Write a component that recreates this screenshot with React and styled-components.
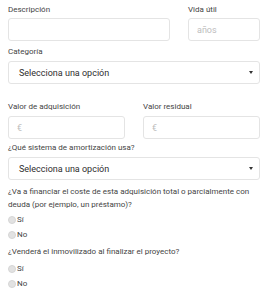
import React from "react";
import styled, { createGlobalStyle } from "styled-components";

const GlobalStyle = createGlobalStyle`
  html, body {
    margin: 0;
    padding: 0;
    background: #fff;
  }
  body {
    font-family: Roboto, "Open Sans", "DejaVu Sans", sans-serif;
    color: #444;
  }
`;

const Form = styled.form`
  width: 252px;
  padding: 3px 8px 0 8px;
  display: flex;
  flex-direction: column;
`;

const Row = styled.div`
  display: grid;
  grid-template-columns: ${(p) => p.$cols};
  column-gap: 18px;
  margin-bottom: ${(p) => p.$mb || "8px"};
`;

const Field = styled.div`
  display: flex;
  flex-direction: column;
  margin-bottom: ${(p) => p.$mb || "0"};
`;

const Label = styled.label`
  font-size: 8px;
  line-height: 13px;
  color: #444;
  margin-bottom: ${(p) => p.$mb || "2px"};
`;

const Input = styled.input`
  box-sizing: border-box;
  height: 23px;
  width: 100%;
  border: 1px solid #e4e4e4;
  border-radius: 3px;
  padding: 0 8px;
  font-family: inherit;
  font-size: 9px;
  color: #444;
  outline: none;
  &::placeholder {
    color: #bdbdbd;
  }
`;

const SelectBox = styled.div`
  box-sizing: border-box;
  height: 23px;
  border: 1px solid #e4e4e4;
  border-radius: 3px;
  padding: 0 6px 0 10px;
  display: flex;
  align-items: center;
  justify-content: space-between;
  font-size: 9px;
  color: #2e2e2e;
`;

const Caret = styled.span`
  width: 0;
  height: 0;
  border-left: 2px solid transparent;
  border-right: 2px solid transparent;
  border-top: 3px solid #333;
`;

const RadioList = styled.div`
  display: flex;
  flex-direction: column;
  margin-top: ${(p) => p.$mt || "0"};
`;

const RadioRow = styled.label`
  display: flex;
  align-items: center;
  height: 15px;
  font-size: 8px;
  color: #444;
`;

const Dot = styled.span`
  box-sizing: border-box;
  width: 8px;
  height: 8px;
  border-radius: 50%;
  background: #e2e2e2;
  border: 1px solid #d6d6d6;
  margin-right: 1px;
`;

const Question = styled.div`
  font-size: 8px;
  line-height: 13px;
  color: #444;
`;

const Group = styled.div`
  display: flex;
  flex-direction: column;
  margin-bottom: ${(p) => p.$mb || "0"};
`;

function Select() {
  return (
    <SelectBox>
      <span>Selecciona una opción</span>
      <Caret />
    </SelectBox>
  );
}

function Radios({ mt }) {
  return (
    <RadioList $mt={mt}>
      <RadioRow>
        <Dot />
        Sí
      </RadioRow>
      <RadioRow>
        <Dot />
        No
      </RadioRow>
    </RadioList>
  );
}

export default function App() {
  return (
    <>
      <GlobalStyle />
      <Form>
        <Row $cols="162px 72px" $mb="4px">
          <Field>
            <Label>Descripción</Label>
            <Input />
          </Field>
          <Field>
            <Label>Vida útil</Label>
            <Input placeholder="años" />
          </Field>
        </Row>
        <Field $mb="16px">
          <Label $mb="3px">Categoría</Label>
          <Select />
        </Field>
        <Row $cols="117px 117px" $mb="2px">
          <Field>
            <Label $mb="3px">Valor de adquisición</Label>
            <Input placeholder="€" />
          </Field>
          <Field>
            <Label $mb="3px">Valor residual</Label>
            <Input placeholder="€" />
          </Field>
        </Row>
        <Field $mb="5px">
          <Label $mb="3px">¿Qué sistema de amortización usa?</Label>
          <Select />
        </Field>
        <Group $mb="3px">
          <Question>
            ¿Va a financiar el coste de esta adquisición total o parcialmente con
            deuda (por ejemplo, un préstamo)?
          </Question>
          <Radios mt="1px" />
        </Group>
        <Group>
          <Question>¿Venderá el inmovilizado al finalizar el proyecto?</Question>
          <Radios mt="3px" />
        </Group>
      </Form>
    </>
  );
}
